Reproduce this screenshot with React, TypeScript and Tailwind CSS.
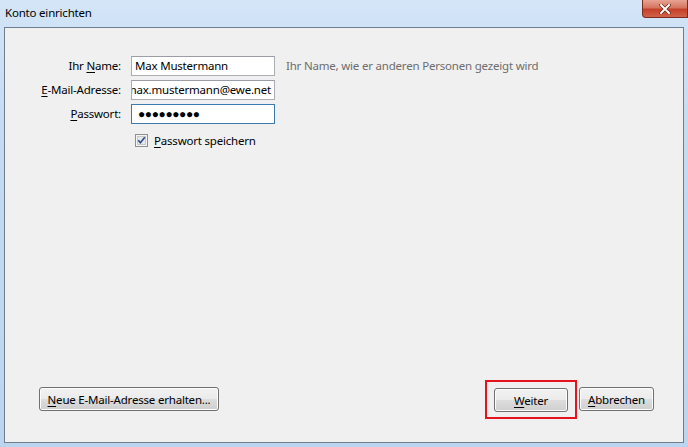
import React from 'react';

const font = { fontFamily: '"Noto Sans", "Open Sans", sans-serif' };

// Win7-style push button with an underlined access key
const WinButton: React.FC<{ k: string; rest: string; className?: string }> = ({ k, rest, className }) => (
  <button
    className={`h-[24px] rounded-[3px] border border-[#707070] bg-[linear-gradient(to_bottom,#f2f2f2_0%,#ebebeb_50%,#dddddd_51%,#cfcfcf_100%)] pt-[1px] text-[11.5px] tracking-[-0.2px] text-black shadow-[inset_0_0_0_1px_#fcfcfc] ${className ?? ''}`}
  >
    <span className="underline underline-offset-2">{k}</span>
    {rest}
  </button>
);

const Field: React.FC<{ children: React.ReactNode; focused?: boolean }> = ({ children, focused }) => (
  <div
    className={`h-[20px] w-[144px] overflow-hidden whitespace-nowrap border bg-white px-[3px] text-[11.5px] leading-[18px] tracking-[-0.2px] text-black ${
      focused ? 'border-[#3d7bad]' : 'border-[#abadb3] border-t-[#9b9ea6]'
    }`}
  >
    {children}
  </div>
);

const Label: React.FC<{ k: string; pre?: string; rest: string }> = ({ k, pre, rest }) => (
  <div className="pr-[1px] text-right text-[11.5px] leading-[20px] tracking-[-0.2px] text-black">
    {pre}
    <span className="underline underline-offset-2">{k}</span>
    {rest}
  </div>
);

export default function App() {
  return (
    <div
      className="flex h-[447px] w-[688px] flex-col overflow-hidden bg-[linear-gradient(to_bottom,#d3e5f7_0%,#c4dbf2_30%,#bcd5ee_100%)]"
      style={font}
    >
      {/* Title bar */}
      <div className="flex h-[27px] items-start justify-between">
        <div className="pl-[5px] pt-[4px] text-[11.5px] tracking-[-0.2px] text-black">Konto einrichten</div>
        <div className="flex h-[18px] w-[46px] items-center justify-center rounded-bl-[4px] border border-t-0 border-[#7a2a1e] bg-[linear-gradient(to_bottom,#e8a393_0%,#d5755f_45%,#c4402a_55%,#d1634a_100%)]">
          <svg width="12" height="10" viewBox="0 0 12 10">
            <path d="M2 1 L10 9 M10 1 L2 9" stroke="#5a1a10" strokeWidth="3.2" strokeLinecap="square" />
            <path d="M2 1 L10 9 M10 1 L2 9" stroke="#ffffff" strokeWidth="2" strokeLinecap="square" />
          </svg>
        </div>
      </div>

      {/* Client area */}
      <div className="mx-[4px] mb-[4px] flex flex-1 flex-col border border-[#6f7e8f] bg-[#f0f0f0]">
        <div className="grid grid-cols-[117px_144px_auto] items-center gap-x-[9px] gap-y-[4px] pt-[28px]">
          <Label pre="Ihr " k="N" rest="ame:" />
          <Field>Max Mustermann</Field>
          <div className="pl-[2px] text-[11.5px] tracking-[-0.2px] text-[#6d6d6d]">
            Ihr Name, wie er anderen Personen gezeigt wird
          </div>

          <Label k="E" rest="-Mail-Adresse:" />
          <Field>
            <div className="flex justify-end">max.mustermann@ewe.net</div>
          </Field>
          <div />

          <Label k="P" rest="asswort:" />
          <Field focused>
            <span className="pl-[3px] text-[12px] tracking-[-0.4px]">●●●●●●●●●</span>
          </Field>
          <div />

          <div />
          <div className="flex items-center gap-[6px] pl-[4px] pt-[4px]">
            <svg width="13" height="13" viewBox="0 0 13 13">
              <rect x="0.5" y="0.5" width="12" height="12" fill="#f4f4f4" stroke="#8e8f8f" />
              <rect x="2.5" y="2.5" width="8" height="8" fill="#e6e9ee" stroke="#c4c7cc" />
              <path d="M3.3 6.2 L5.4 8.8 L9.8 3.2" fill="none" stroke="#2a4a8a" strokeWidth="1.6" />
            </svg>
            <span className="text-[11.5px] tracking-[-0.2px] text-black">
              <span className="underline underline-offset-2">P</span>asswort speichern
            </span>
          </div>
          <div />
        </div>

        <div className="flex-1" />

        {/* Bottom buttons */}
        <div className="flex items-center pb-[30px] pl-[34px] pr-[29px]">
          <WinButton k="N" rest="eue E-Mail-Adresse erhalten..." className="w-[180px]" />
          <div className="flex-1" />
          <div className="relative">
            <WinButton k="W" rest="eiter" className="w-[74px]" />
            <span className="pointer-events-none absolute -bottom-[7px] -left-[9px] -right-[9px] -top-[7px] border-2 border-[#e4131c]" />
          </div>
          <WinButton k="A" rest="bbrechen" className="ml-[11px] w-[75px]" />
        </div>
      </div>
    </div>
  );
}
